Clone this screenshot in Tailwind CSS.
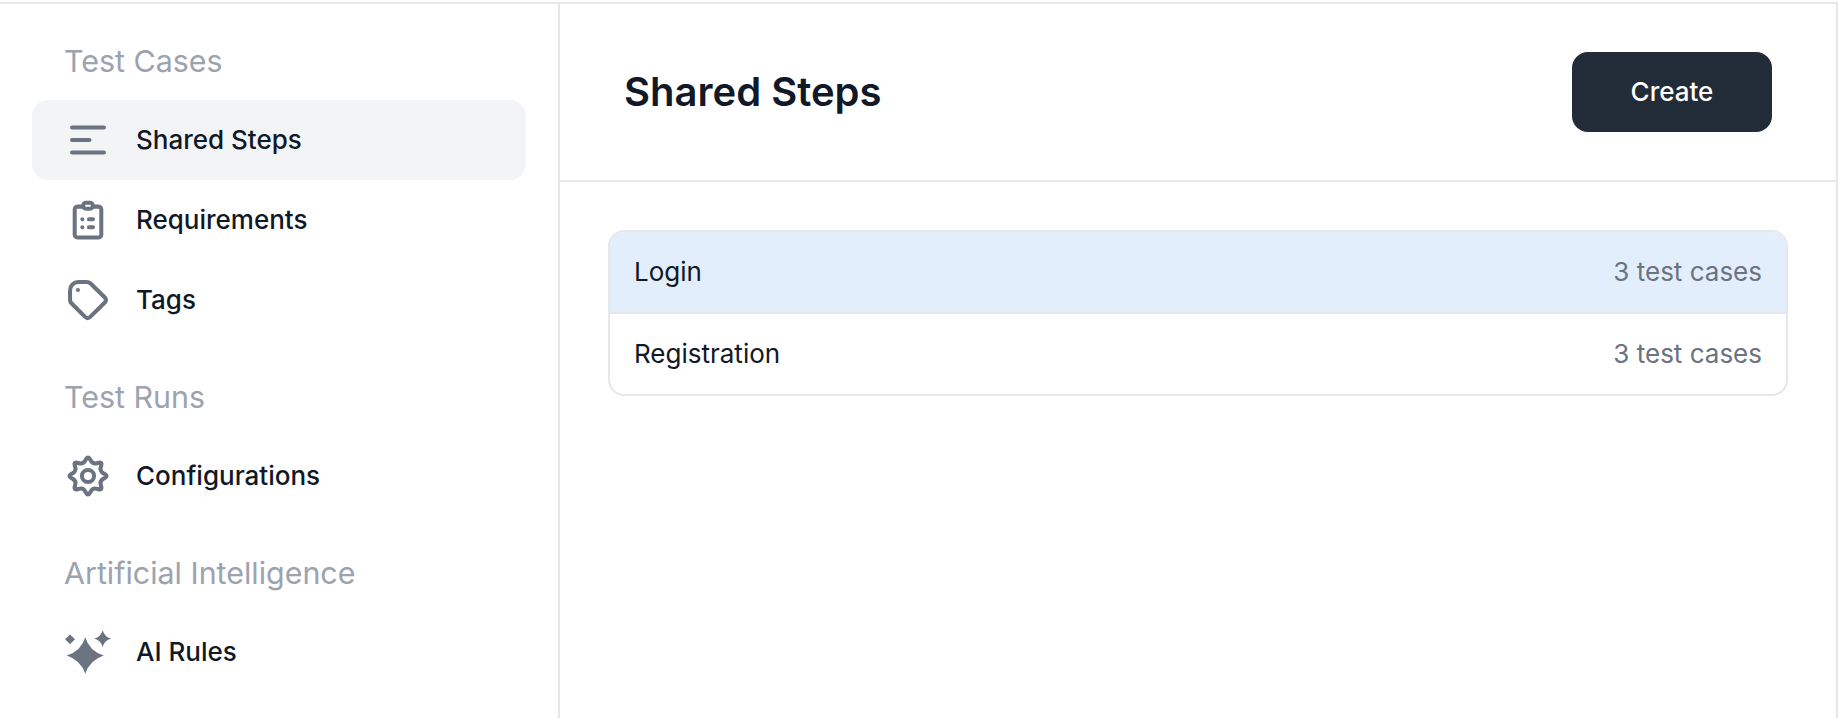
<!doctype html>
<html>
<head>
<meta charset="utf-8">
<script src="https://cdn.jsdelivr.net/npm/@tailwindcss/browser@4"></script>
</head>
<body class="bg-white">
<div class="mt-[2px] flex h-[716px] w-[1838px] overflow-hidden border-t-[2px] border-r-[2px] border-[#e5e7eb] font-['Inter',sans-serif]">
  <aside class="w-[560px] shrink-0 border-r-[2px] border-[#e5e7eb] px-[32px] pt-[35px]">
    <div class="h-[44px] pl-[32px] text-[30.4px] leading-[44px] text-[#9ca3af]">Test Cases</div>
    <nav class="mt-[17px] flex flex-col">
      <div class="flex h-[80px] items-center gap-[26px] rounded-[16px] bg-[#f3f4f6] pl-[34px] text-[26px] font-medium text-[#111827]">
        <svg class="h-[44px] w-[44px] shrink-0 overflow-visible text-[#6b7280]" viewBox="0 0 24 24" fill="none" stroke="currentColor" stroke-width="2.2" stroke-linecap="round" stroke-linejoin="round"><path d="M3.300 5.200H20.700M3.300 12H12.800M3.300 18.800H20.700"/></svg>
        <span class="pb-[2px]">Shared Steps</span>
      </div>
      <div class="flex h-[80px] items-center gap-[26px] pl-[34px] text-[26px] font-medium text-[#111827]">
        <svg class="h-[44px] w-[44px] shrink-0 overflow-visible text-[#6b7280]" viewBox="0 0 24 24" fill="none" stroke="currentColor" stroke-width="2.2" stroke-linecap="round" stroke-linejoin="round"><path d="M9.300 4.700H6.200A1.500 1.500 0 0 0 4.750 6.200V20A1.500 1.500 0 0 0 6.200 21.500H17.800A1.500 1.500 0 0 0 19.250 20V6.200A1.500 1.500 0 0 0 17.800 4.700H14.700"/><rect x="9.300" y="2.550" width="5.400" height="3.300" rx="1.650"/><path d="M12.500 11.600h2.250M12.500 16h2.250M8.900 11.600h.01M8.900 16h.01"/></svg>
        <span class="pb-[2px]">Requirements</span>
      </div>
      <div class="flex h-[80px] items-center gap-[26px] pl-[34px] text-[26px] font-medium text-[#111827]">
        <svg class="h-[44px] w-[44px] shrink-0 overflow-visible text-[#6b7280]" viewBox="0 0 24 24" fill="none" stroke="currentColor" stroke-width="2.2" stroke-linecap="round" stroke-linejoin="round"><path d="M6.700 2.200H11.200Q12.600 2.200 13.400 3L21.200 10.600Q22.400 12 21.200 13.400L13.200 21.200Q11.800 22.500 10.400 21.200L3 13.800Q2.200 13 2.200 11.800V6.700A4.500 4.500 0 0 1 6.700 2.200Z"/><path d="M6.500 6.500h.01"/></svg>
        <span class="pb-[2px]">Tags</span>
      </div>
    </nav>
    <div class="mt-[35px] h-[44px] pl-[32px] text-[30.4px] leading-[44px] text-[#9ca3af]">Test Runs</div>
    <div class="mt-[17px] flex h-[80px] items-center gap-[26px] pl-[34px] text-[26px] font-medium text-[#111827]">
      <svg class="h-[44px] w-[44px] shrink-0 overflow-visible text-[#6b7280]" viewBox="0 0 24 24" fill="none" stroke="currentColor" stroke-width="2.2" stroke-linecap="round" stroke-linejoin="round"><path d="M20.750 13.265Q18.100 14.530 19.080 17.295T17.295 19.080T13.265 20.750T10.735 20.750T6.705 19.080T4.920 17.295T3.250 13.265T3.250 10.735T4.920 6.705T6.705 4.920T10.735 3.250T13.265 3.250T17.295 4.920T19.080 6.705T20.750 10.735T20.750 13.265Z"/><circle cx="12" cy="12" r="3.300"/></svg>
      <span class="pb-[2px]">Configurations</span>
    </div>
    <div class="mt-[35px] h-[44px] pl-[32px] text-[30.4px] leading-[44px] text-[#9ca3af]">Artificial Intelligence</div>
    <div class="mt-[17px] flex h-[80px] items-center gap-[26px] pl-[34px] text-[26px] font-medium text-[#111827]">
      <svg class="h-[44px] w-[44px] shrink-0 overflow-visible text-[#6b7280]" viewBox="0 0 24 24" fill="currentColor"><path d="M10.500 3.900Q12.600 11.300 20.600 13.900Q12.800 16.500 10.500 23.900Q8.200 16.500 .4 13.900Q8.400 11.300 10.500 3.900Z"/><path d="M20 .1Q21 3.700 24.600 4.700Q21 5.700 20 9.300Q19 5.700 15.400 4.700Q19 3.700 20 .1Z"/><path d="M2.200 2.400 4.900 5.100 2.200 7.800 -.5 5.100Z"/></svg>
      <span class="pb-[2px]">AI Rules</span>
    </div>
  </aside>
  <main class="flex-1">
    <header class="flex h-[178px] items-center justify-between border-b-[2px] border-[#e5e7eb] pl-[64px] pr-[64px]">
      <h1 class="text-[40px] font-semibold text-[#111827]">Shared Steps</h1>
      <button class="h-[80px] w-[200px] rounded-[16px] bg-[#222c38] pb-[1px] text-[26px] font-medium text-white">Create</button>
    </header>
    <div class="mx-[48px] mt-[48px] overflow-hidden rounded-[16px] border-[2px] border-[#e5e7eb]">
      <div class="flex h-[82px] items-center justify-between border-b-[2px] border-[#e5e7eb] bg-[#e2eefb] px-[24px] pb-[1px] text-[26px] text-[#111827]">
        <span>Login</span><span class="text-[#6b7280]">3 test cases</span>
      </div>
      <div class="flex h-[80px] items-center justify-between px-[24px] pb-[1px] text-[26px] text-[#111827]">
        <span>Registration</span><span class="text-[#6b7280]">3 test cases</span>
      </div>
    </div>
  </main>
</div>
</body>
</html>
